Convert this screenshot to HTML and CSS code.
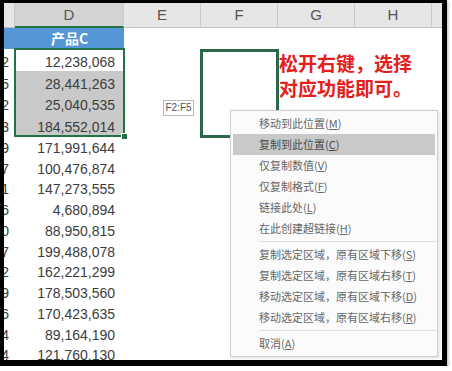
FILE: index.html
```html
<!DOCTYPE html>
<html lang="zh-CN">
  <head>
    <meta charset="UTF-8" />
    <meta name="viewport" content="width=device-width, initial-scale=1.0" />
    <title>复制到此位置</title>
    <link rel="stylesheet" href="styles.css">
  </head>
  <body>
    <div class="shot">
      <div class="sheet">
        <div class="col-head"></div>
        <div class="col-head active">D</div>
        <div class="col-head">E</div>
        <div class="col-head">F</div>
        <div class="col-head">G</div>
        <div class="col-head">H</div>
        <div class="col-head last"></div>

        <div class="title c"></div>
        <div class="title d">产品C</div>

        <div class="cut c"><span>2</span></div>
        <div class="num d current">12,238,068<span class="selection"><span class="handle"></span></span></div>
        <div class="cut c"><span>5</span></div><div class="num d sel">28,441,263</div>
        <div class="cut c"><span>2</span></div><div class="num d sel">25,040,535</div>
        <div class="cut c"><span>3</span></div><div class="num d sel">184,552,014</div>
        <div class="cut c"><span>9</span></div><div class="num d">171,991,644</div>
        <div class="cut c"><span>7</span></div><div class="num d">100,476,874</div>
        <div class="cut c"><span>1</span></div><div class="num d">147,273,555</div>
        <div class="cut c"><span>6</span></div><div class="num d">4,680,894</div>
        <div class="cut c"><span>0</span></div><div class="num d">88,950,815</div>
        <div class="cut c"><span>7</span></div><div class="num d">199,488,078</div>
        <div class="cut c"><span>2</span></div><div class="num d">162,221,299</div>
        <div class="cut c"><span>9</span></div><div class="num d">178,503,560</div>
        <div class="cut c"><span>6</span></div><div class="num d">170,423,635</div>
        <div class="cut c"><span>4</span></div><div class="num d">89,164,190</div>
        <div class="cut c"><span>4</span></div><div class="num d">121,760,130</div>

        <div class="drag-box"></div>
        <div class="note">松开右键，选择<br>对应功能即可。</div>
      </div>

      <div class="range-tip">F2:F5</div>

      <ul class="menu">
        <li>移动到此位置(<u>M</u>)</li>
        <li class="hover">复制到此位置(<u>C</u>)</li>
        <li>仅复制数值(<u>V</u>)</li>
        <li>仅复制格式(<u>F</u>)</li>
        <li>链接此处(<u>L</u>)</li>
        <li>在此创建超链接(<u>H</u>)</li>
        <li class="sep"></li>
        <li>复制选定区域，原有区域下移(<u>S</u>)</li>
        <li>复制选定区域，原有区域右移(<u>T</u>)</li>
        <li>移动选定区域，原有区域下移(<u>D</u>)</li>
        <li>移动选定区域，原有区域右移(<u>R</u>)</li>
        <li class="sep"></li>
        <li>取消(<u>A</u>)</li>
      </ul>
    </div>
  </body>
</html>
```

FILE: styles.css
```css
body {
  margin: 0;
  padding: 0;
  background-color: #fff;
  font-family: "Liberation Sans", "Noto Sans CJK SC", sans-serif;
}
.shot {
  position: relative;
  width: 438px;
  height: 357px;
  border-style: solid;
  border-color: #000;
  border-width: 3px 5px 6px 4px;
  overflow: hidden;
  background: #fff;
  box-shadow: 1px 2px 3px rgba(0, 0, 0, 0.3);
}
.sheet {
  display: grid;
  grid-template-columns: 11px 109px 77px 77px 77px 77px 10px;
  grid-template-rows: 25px 21px repeat(4, 21.75px) repeat(11, 20.75px);
}
.col-head {
  box-sizing: border-box;
  background: #e6e6e6;
  border-right: 1px solid #c9c9c9;
  border-bottom: 1px solid #c2c2c2;
  color: #555;
  font-size: 15px;
  line-height: 24px;
  text-align: center;
}
.col-head.active {
  background: #d3d3d3;
  border-bottom: 2px solid #217346;
}
.col-head.last {
  border-right: none;
}
.c {
  grid-column: 1;
}
.d {
  grid-column: 2;
}
.title {
  background: #5597d6;
  color: #fff;
  font-family: "Noto Sans CJK SC", sans-serif;
  font-weight: 700;
  font-size: 14px;
  line-height: 21px;
  text-align: center;
}
.num,
.cut {
  display: flex;
  justify-content: flex-end;
  align-items: flex-end;
  overflow: hidden;
  color: #3c3c3c;
  font-size: 14px;
  line-height: 16px;
  padding-bottom: 1px;
}
.num {
  padding-right: 9px;
}
.cut {
  padding-right: 6px;
}
.cut span {
  flex: none;
}
.num.sel {
  background: #c9c9c9;
}
.num.current {
  position: relative;
  overflow: visible;
  z-index: 1;
}
.selection {
  position: absolute;
  left: -1px;
  top: -1px;
  width: 107px;
  height: 85px;
  border: 2px solid #217346;
}
.handle {
  position: absolute;
  right: -5px;
  bottom: -5px;
  width: 5px;
  height: 5px;
  background: #217346;
  border: 1px solid #fff;
}
.drag-box {
  grid-column: 4;
  grid-row: 3 / span 4;
  margin: 0 -1px -2px -1px;
  border: 3px solid #2b6649;
}
.note {
  grid-column: 5 / span 3;
  grid-row: 3 / span 3;
  padding: 1px 0 0 1px;
  color: #e3201b;
  font-family: "Noto Sans CJK SC", sans-serif;
  font-weight: 700;
  font-size: 19px;
  line-height: 25px;
  white-space: nowrap;
}
.range-tip {
  position: absolute;
  left: 159px;
  top: 97px;
  width: 29px;
  height: 14px;
  border: 1px solid #bdbdbd;
  background: #fff;
  color: #555;
  font-size: 10px;
  line-height: 14px;
  text-align: center;
}
.menu {
  position: absolute;
  left: 226px;
  top: 107px;
  width: 206px;
  margin: 0;
  padding: 2px 0;
  list-style: none;
  background: #fbfbfb;
  border: 1px solid #cfcfcf;
  box-shadow: 1px 1px 3px rgba(0, 0, 0, 0.15);
  font-family: "Noto Sans CJK SC", sans-serif;
  font-size: 11px;
  color: #666;
}
.menu li {
  height: 21px;
  line-height: 21px;
  margin: 0 2px;
  padding-left: 26px;
  white-space: nowrap;
}
.menu li.hover {
  background: #c9c9c9;
  color: #4a4a4a;
}
.menu li.sep {
  height: 0;
  margin: 2px 0 2px 28px;
  padding: 0;
  border-top: 1px solid #e0e0e0;
}
.menu u {
  text-underline-offset: 1px;
}
```
